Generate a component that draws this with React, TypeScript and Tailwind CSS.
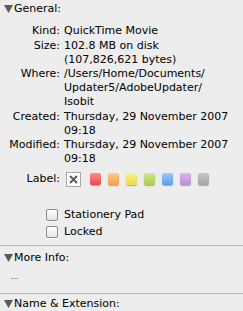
import React from 'react';

const Triangle: React.FC = () => (
  <svg width="9" height="8" viewBox="0 0 9 8" className="shrink-0">
    <path d="M0 0 H9 L4.5 8 Z" fill="#5a5a5a" />
  </svg>
);

const SectionHeader: React.FC<{ title: string }> = ({ title }) => (
  <div className="flex items-center h-[18px] pl-[4px] gap-[1px]">
    <Triangle />
    <span>{title}</span>
  </div>
);

const infoRows: { label: string; lines: string[] }[] = [
  { label: 'Kind:', lines: ['QuickTime Movie'] },
  { label: 'Size:', lines: ['102.8 MB on disk', '(107,826,621 bytes)'] },
  { label: 'Where:', lines: ['/Users/Home/Documents/', 'Updater5/AdobeUpdater/', 'Isobit'] },
  { label: 'Created:', lines: ['Thursday, 29 November 2007', '09:18'] },
  { label: 'Modified:', lines: ['Thursday, 29 November 2007', '09:18'] },
];

const swatches = [
  'from-[#ff8a8a] to-[#e84a4a]',
  'from-[#ffc98a] to-[#f4a04a]',
  'from-[#fbf27e] to-[#e8dc4e]',
  'from-[#cfe88a] to-[#a8cf4e]',
  'from-[#9cc8ff] to-[#5e9cf0]',
  'from-[#dcb4ef] to-[#bb8ed8]',
  'from-[#c8c8c8] to-[#a4a4a4]',
];

const Checkbox: React.FC<{ label: string }> = ({ label }) => (
  <label className="flex items-center h-[16px]">
    <span className="w-[12px] h-[12px] ml-[46px] mr-[6px] rounded-[2px] border border-[#8c8c8c] bg-gradient-to-b from-white to-[#e4e4e4] shadow-[0_1px_0_rgba(255,255,255,0.6)]" />
    <span>{label}</span>
  </label>
);

const App: React.FC = () => {
  return (
    <div className="w-[243px] h-[311px] overflow-hidden bg-[#ededed] text-[11px] leading-[14px] text-black font-['DejaVu_Sans',sans-serif]">
      <SectionHeader title="General:" />

      <div className="mt-[6px] flex flex-col gap-y-[0.5px]">
        {infoRows.map((row) => (
          <div key={row.label} className="grid grid-cols-[60px_1fr] gap-x-[4px]">
            <div className="text-right">{row.label}</div>
            <div>
              {row.lines.map((line, i) => (
                <div key={i} className="whitespace-nowrap">{line}</div>
              ))}
            </div>
          </div>
        ))}
      </div>

      <div className="mt-[5px] flex items-center h-[16px]">
        <div className="w-[60px] text-right">Label:</div>
        <div className="ml-[6px] w-[15px] h-[15px] border border-[#a8a8a8] bg-white flex items-center justify-center">
          <svg width="9" height="9" viewBox="0 0 9 9">
            <path d="M1.5 1.5 L7.5 7.5 M7.5 1.5 L1.5 7.5" stroke="#555" strokeWidth="1.8" strokeLinecap="round" />
          </svg>
        </div>
        <div className="ml-[9px] flex gap-[7px]">
          {swatches.map((c) => (
            <span
              key={c}
              className={`w-[11px] h-[12px] rounded-[2px] bg-gradient-to-b ${c} shadow-[0_1px_1px_rgba(0,0,0,0.3)]`}
            />
          ))}
        </div>
      </div>

      <div className="mt-[20px] flex flex-col gap-[1px]">
        <Checkbox label="Stationery Pad" />
        <Checkbox label="Locked" />
      </div>

      <div className="mt-[5px] border-t border-[#b4b4b4]" />
      <div className="mt-[3px]">
        <SectionHeader title="More Info:" />
      </div>
      <div className="pl-[10px] mt-[4px] h-[14px] text-[#9a9a9a]">--</div>

      <div className="mt-[8px] border-t border-[#b4b4b4]" />
      <div className="mt-[1px]">
        <SectionHeader title="Name & Extension:" />
      </div>
    </div>
  );
};

export default App;
